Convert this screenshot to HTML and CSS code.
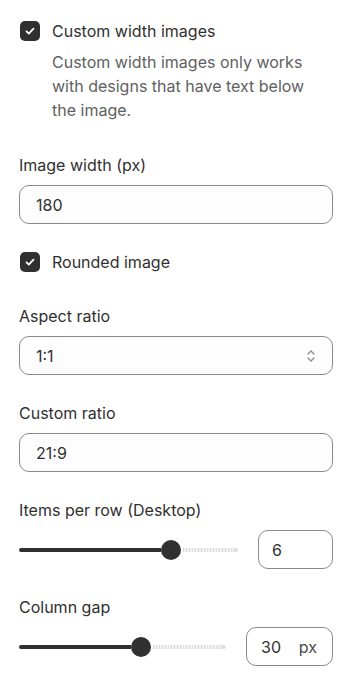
FILE: index.html
```html
<!DOCTYPE html>
<html lang="en">
<head>
    <meta charset="UTF-8">
    <meta name="viewport" content="width=device-width, initial-scale=1.0">
    <title>Image settings</title>
    <link rel="stylesheet" href="styles.css">
</head>
<body>
    <div class="panel">
        <!-- Custom width -->
        <div class="check-field">
            <div class="check-row">
                <span class="checkbox">
                    <svg width="12" height="12" viewBox="0 0 12 12"><path d="M2.5 6.3l2.3 2.3 4.7-5" fill="none" stroke="#fff" stroke-width="1.8" stroke-linecap="round" stroke-linejoin="round"/></svg>
                </span>
                <span class="check-label">Custom width images</span>
            </div>
            <p class="help">Custom width images only works with designs that have text below the image.</p>
        </div>

        <div class="field">
            <label class="label">Image width (px)</label>
            <div class="text-input">180</div>
        </div>

        <div class="check-field single">
            <div class="check-row">
                <span class="checkbox">
                    <svg width="12" height="12" viewBox="0 0 12 12"><path d="M2.5 6.3l2.3 2.3 4.7-5" fill="none" stroke="#fff" stroke-width="1.8" stroke-linecap="round" stroke-linejoin="round"/></svg>
                </span>
                <span class="check-label">Rounded image</span>
            </div>
        </div>

        <div class="field">
            <label class="label">Aspect ratio</label>
            <div class="text-input select">
                <span>1:1</span>
                <svg width="10" height="14" viewBox="0 0 10 14"><path d="M2 5l3-3 3 3M2 9l3 3 3-3" fill="none" stroke="#8a8a8a" stroke-width="1.3" stroke-linecap="round" stroke-linejoin="round"/></svg>
            </div>
        </div>

        <div class="field">
            <label class="label">Custom ratio</label>
            <div class="text-input">21:9</div>
        </div>

        <div class="field">
            <label class="label">Items per row (Desktop)</label>
            <div class="range-row">
                <div class="slider">
                    <span class="fill" style="width: 142px"></span>
                    <span class="thumb"></span>
                    <span class="rest"></span>
                </div>
                <div class="num-box items">6</div>
            </div>
        </div>

        <div class="field">
            <label class="label">Column gap</label>
            <div class="range-row">
                <div class="slider">
                    <span class="fill" style="width: 112px"></span>
                    <span class="thumb"></span>
                    <span class="rest"></span>
                </div>
                <div class="num-box gap">
                    <span>30</span>
                    <span class="unit">px</span>
                </div>
            </div>
        </div>
    </div>
</body>
</html>
```

FILE: styles.css
```css
* {
    margin: 0;
    padding: 0;
    box-sizing: border-box;
}

body {
    font-family: Inter, 'Noto Sans', sans-serif;
    font-size: 16px;
    color: #303030;
    background: #ffffff;
}

.panel {
    padding: 19px 18px 0 19px;
    display: flex;
    flex-direction: column;
}

.check-row {
    display: flex;
    align-items: center;
    gap: 12px;
    height: 24px;
    line-height: 24px;
}

.checkbox {
    width: 20px;
    height: 20px;
    border-radius: 5px;
    background: #303030;
    display: flex;
    align-items: center;
    justify-content: center;
    margin-left: 1px;
}

.help {
    color: #616161;
    line-height: 24px;
    margin: 7px 0 0 33px;
    padding-right: 20px;
}

.check-field {
    margin-bottom: 31px;
}

.check-field.single {
    margin-bottom: 30px;
}

.field {
    margin-bottom: 26px;
}

.label {
    display: block;
    line-height: 24px;
    margin-bottom: 8px;
}

.text-input {
    height: 39px;
    border: 1px solid #8a8a8a;
    border-radius: 10px;
    background: #fdfdfd;
    padding: 0 16px;
    display: flex;
    align-items: center;
}

.select {
    justify-content: space-between;
    padding-right: 16px;
}

.range-row {
    display: flex;
    align-items: center;
    gap: 20px;
}

.slider {
    flex: 1;
    display: flex;
    align-items: center;
    height: 20px;
}

.fill {
    height: 4px;
    background: #303030;
    border-radius: 2px 0 0 2px;
}

.thumb {
    width: 20px;
    height: 20px;
    border-radius: 50%;
    background: #303030;
    flex-shrink: 0;
}

.rest {
    flex: 1;
    height: 4px;
    margin-left: 2px;
    background:
        linear-gradient(#e0e0e0, #e0e0e0) right / 5px 100% no-repeat,
        repeating-linear-gradient(90deg, #dadada 0 1px, #f2f2f2 1px 3px);
    border-radius: 0 2px 2px 0;
}

.num-box {
    height: 39px;
    border: 1px solid #8a8a8a;
    border-radius: 10px;
    display: flex;
    align-items: center;
    padding: 0 13px;
}

.num-box.items {
    width: 75px;
}

.num-box.gap {
    width: 87px;
    gap: 0;
    justify-content: space-between;
    padding: 0 15px 0 14px;
}

.unit {
    color: #4a4a4a;
}
```
